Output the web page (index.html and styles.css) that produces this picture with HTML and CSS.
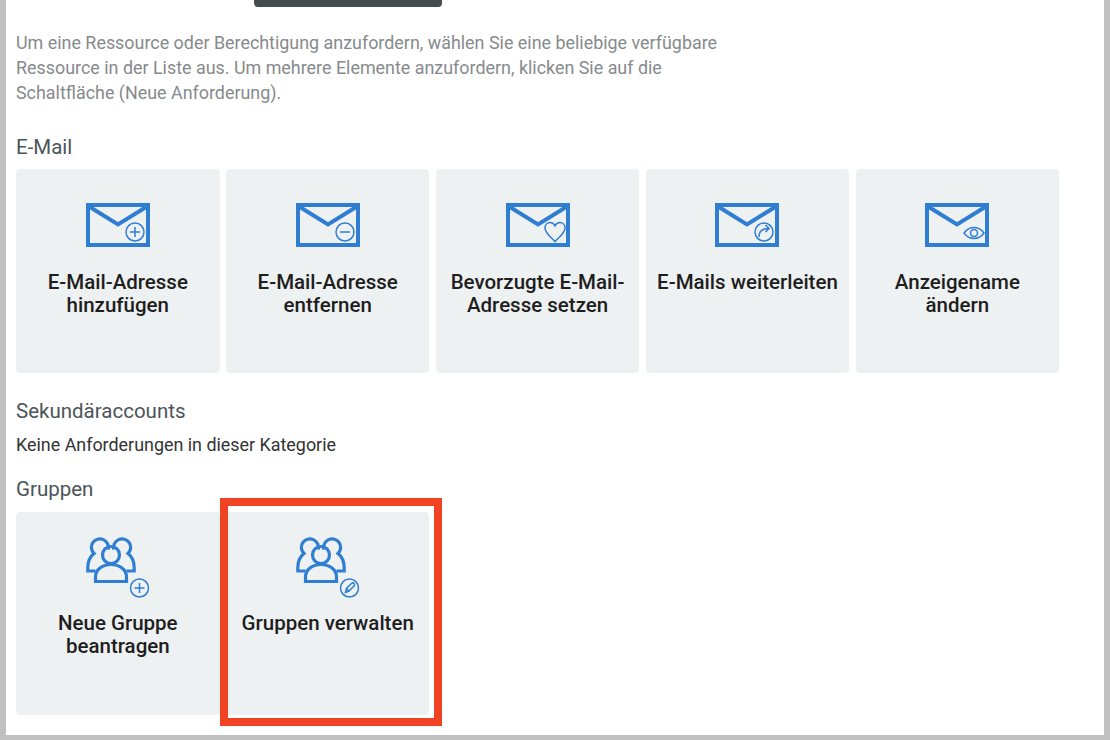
FILE: index.html
```html
<!DOCTYPE html>
<html lang="de">
<head>
<meta charset="utf-8">
<title>Ressource anfordern</title>
<link rel="stylesheet" href="styles.css">
</head>
<body>
<main class="frame">
  <div class="top-button"></div>
  <p class="intro">Um eine Ressource oder Berechtigung anzufordern, wählen Sie eine beliebige verfügbare<br>Ressource in der Liste aus. Um mehrere Elemente anzufordern, klicken Sie auf die<br>Schaltfläche (Neue Anforderung).</p>

  <h2 class="section-title first">E-Mail</h2>
  <div class="cards">
    <a class="card mail">
      <svg class="icon" viewBox="0 0 64 76"><g transform="translate(0 9)"><rect class="thick" x="2" y="2" width="60" height="40"/><path class="thick" d="M3 3.500 32 21.500 61 3.500"/><circle class="thin" cx="49" cy="29" r="9"/><path class="thin" d="M49 24v10M44 29h10"/></g></svg>
      <span class="card-title">E-Mail-Adresse hinzufügen</span>
    </a>
    <a class="card mail">
      <svg class="icon" viewBox="0 0 64 76"><g transform="translate(0 9)"><rect class="thick" x="2" y="2" width="60" height="40"/><path class="thick" d="M3 3.500 32 21.500 61 3.500"/><circle class="thin" cx="49" cy="29" r="9"/><path class="thin" d="M44 29h10"/></g></svg>
      <span class="card-title">E-Mail-Adresse entfernen</span>
    </a>
    <a class="card mail">
      <svg class="icon" viewBox="0 0 64 76"><g transform="translate(0 9)"><rect class="thick" x="2" y="2" width="60" height="40"/><path class="thick" d="M3 3.500 32 21.500 61 3.500"/><path class="thin" d="M49 38.500C46 35 39 30.500 39 25 39 21.500 41.500 19.500 44 19.500c2.200 0 4 1.300 5 3.300 1-2 2.800-3.300 5-3.300 2.500 0 5 2 5 5.500C59 30.500 52 35 49 38.500Z"/></g></svg>
      <span class="card-title">Bevorzugte E-Mail-Adresse setzen</span>
    </a>
    <a class="card mail">
      <svg class="icon" viewBox="0 0 64 76"><g transform="translate(0 9)"><rect class="thick" x="2" y="2" width="60" height="40"/><path class="thick" d="M3 3.500 32 21.500 61 3.500"/><circle class="thin" cx="49" cy="29" r="9"/><path class="thin" d="M44 34c0-5 3-8.500 9.500-8.500M50.500 22l3.500 3.500-3.500 3.500"/></g></svg>
      <span class="card-title">E-Mails weiterleiten</span>
    </a>
    <a class="card mail">
      <svg class="icon" viewBox="0 0 64 76"><g transform="translate(0 9)"><rect class="thick" x="2" y="2" width="60" height="40"/><path class="thick" d="M3 3.500 32 21.500 61 3.500"/><path class="thin" d="M39 30c2.500-3.500 6-5.500 10-5.500s7.500 2 10 5.500c-2.500 3.500-6 5.500-10 5.500S41.500 33.500 39 30Z"/><circle class="thin" cx="49" cy="30" r="3.500"/></g></svg>
      <span class="card-title">Anzeigename ändern</span>
    </a>
  </div>

  <h2 class="section-title after-cards">Sekundäraccounts</h2>
  <p class="empty">Keine Anforderungen in dieser Kategorie</p>

  <h2 class="section-title groups">Gruppen</h2>
  <div class="cards">
    <a class="card group">
      <svg class="icon" viewBox="0 0 64 74">
        <path class="mid" d="M22.100 12.500A8.500 8.500 0 1 0 8 16.500C4 19.500 1.800 24 1.800 31v3H9.500M27.900 12.500A8.500 8.500 0 1 1 42 16.500C46 19.500 48.200 24 48.200 31v3H40.500"/>
        <circle class="mid" cx="25" cy="18" r="8.500"/>
        <path class="mid" d="M9.500 44.500V40C9.500 32 17 27.500 25 27.500S40.500 32 40.500 40v4.500Z"/>
        <circle class="thin" cx="53.500" cy="51" r="9"/><path class="thin" d="M53.500 46v10M48.500 51h10"/>
      </svg>
      <span class="card-title">Neue Gruppe beantragen</span>
    </a>
    <a class="card group highlighted">
      <svg class="icon" viewBox="0 0 64 74">
        <path class="mid" d="M22.100 12.500A8.500 8.500 0 1 0 8 16.500C4 19.500 1.800 24 1.800 31v3H9.500M27.900 12.500A8.500 8.500 0 1 1 42 16.500C46 19.500 48.200 24 48.200 31v3H40.500"/>
        <circle class="mid" cx="25" cy="18" r="8.500"/>
        <path class="mid" d="M9.500 44.500V40C9.500 32 17 27.500 25 27.500S40.500 32 40.500 40v4.500Z"/>
        <circle class="thin" cx="53.500" cy="51" r="9"/><path class="thin" d="M49.500 55.500 50.500 51.500 55.500 46.500a1.500 1.500 0 0 1 2.500 2.500L53 54ZM50.500 51.500 53 54"/>
      </svg>
      <span class="card-title">Gruppen verwalten</span>
    </a>
  </div>
</main>
</body>
</html>
```
FILE: styles.css
```css
* { box-sizing: border-box; }

html, body {
  margin: 0;
  height: 100%;
  overflow: hidden;
}

body {
  background: #c0c0c0;
  font-family: Roboto, "Liberation Sans", sans-serif;
}

.frame {
  height: 735px;
  margin: 0 6px;
  padding: 0 10px;
  background: #fff;
  overflow: hidden;
}

.top-button {
  width: 188px;
  height: 7px;
  margin-left: 238px;
  background: #454c50;
  border-radius: 0 0 4px 4px;
}

.intro {
  margin: 23px 0 0;
  font-size: 17.9px;
  line-height: 25px;
  color: #868a8c;
}

.section-title {
  margin: 0;
  font-size: 20.5px;
  font-weight: 400;
  line-height: 24px;
  color: #4a5459;
}

.section-title.first { margin-top: 30px; margin-bottom: 10px; }
.section-title.after-cards { margin-top: 26px; }
.section-title.groups { margin-bottom: 11px; }

.empty {
  margin: 10px 0 20px;
  font-size: 17.9px;
  line-height: 24px;
  color: #333;
}

.cards {
  display: flex;
  gap: 6.3px;
}

.card {
  position: relative;
  display: flex;
  flex-direction: column;
  align-items: center;
  width: 203.6px;
  height: 204px;
  padding: 25px 10px 0;
  background: #eef1f2;
  border-radius: 4px;
  text-align: center;
}

.card.group { height: 203px; }

.icon {
  display: block;
  flex: none;
  width: 64px;
}

.mail .icon { height: 76px; margin-bottom: 0.75px; }
.group .icon { height: 74px; margin-bottom: 0.75px; }

.card-title {
  font-size: 20.5px;
  font-weight: 500;
  line-height: 23px;
  color: #1e1e1e;
}

.highlighted::after {
  content: "";
  position: absolute;
  top: -14px;
  right: -13px;
  bottom: -11px;
  left: -6px;
  border: 8px solid #f04323;
  pointer-events: none;
}

.icon * {
  fill: none;
  stroke: #2f7ed1;
}

.thick { stroke-width: 4; }
.mid { stroke-width: 3.2; }
.thin { stroke-width: 1.5; }
```
